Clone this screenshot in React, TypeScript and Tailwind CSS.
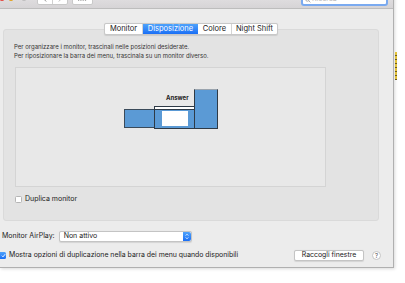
import React from 'react';

const font = { fontFamily: 'Inter, "Noto Sans", sans-serif' };

function Monitors() {
  return (
    <div className="relative ml-[11px] mt-[7px] w-[311px] h-[120px] bg-[#e8e8e8] border border-[#d4d4d4]">
      {/* left monitor */}
      <div className="absolute left-[108px] top-[41px] w-[31px] h-[19px] bg-[#5b9ad5] border border-[#3a4a5a]" />
      {/* main monitor with menu bar */}
      <div className="absolute left-[138px] top-[38px] w-[41px] h-[23px] bg-[#5b9ad5] border border-[#2e3a46] flex flex-col">
        <div className="h-[3px] bg-white border-b border-[#2e3a46]" />
        <div className="ml-[7px] mt-[1px] w-[26px] h-[15px] bg-white" />
      </div>
      {/* right monitor */}
      <div className="absolute left-[178px] top-[21px] w-[24px] h-[40px] bg-[#5b9ad5] border border-[#2e3a46] border-t-[#9aa4ae]" />
      <div className="absolute left-[150px] top-[27px] text-[6px] font-bold text-[#222] leading-none">Answer</div>
    </div>
  );
}

export default function App() {
  return (
    <div className="w-[405px] h-[283px] bg-white overflow-hidden flex text-[#222]" style={font}>
      <div className="w-[394px] h-[281px] -mt-[13px] bg-[#ececec] border-r border-b border-[#b0b0b0] shadow-[1px_1px_3px_rgba(0,0,0,0.15)] flex flex-col shrink-0">
        {/* TITLE BAR */}
        <div className="h-[22px] shrink-0 bg-gradient-to-b from-[#ebe9eb] to-[#d6d4d6] border-b border-[#bdbdbd] flex items-center relative">
          <div className="flex items-center gap-[2px] -ml-[1px]">
            <span className="w-[6px] h-[6px] rounded-full bg-[#fc5f57] border border-[#e0443e]" />
            <span className="w-[6px] h-[6px] rounded-full bg-[#fdbc2e] border border-[#de9f1e] ml-[1px]" />
            <span className="w-[6px] h-[6px] rounded-full bg-[#d0d0d0] border border-[#bcbcbc] ml-[5px]" />
          </div>
          <div className="ml-[10px] flex h-[12px] mt-[3px] rounded-[2px] bg-white border border-[#c9c9c9]">
            <div className="w-[15px] flex items-center justify-center border-r border-[#d0d0d0]">
              <svg width="4" height="6" viewBox="0 0 4 6"><path d="M3.2 0.5 0.8 3 3.2 5.5" fill="none" stroke="#777" strokeWidth="0.8" /></svg>
            </div>
            <div className="w-[14px] flex items-center justify-center">
              <svg width="4" height="6" viewBox="0 0 4 6"><path d="M0.8 0.5 3.2 3 0.8 5.5" fill="none" stroke="#aaa" strokeWidth="0.8" /></svg>
            </div>
          </div>
          <div className="ml-[4px] w-[21px] h-[12px] mt-[3px] rounded-[2px] bg-white border border-[#c9c9c9] flex items-center justify-center">
            <svg width="9" height="4" viewBox="0 0 9 4">
              {[0, 2.3, 4.6, 6.9].map((x) => (
                <g key={x}>
                  <rect x={x} y="0" width="1.2" height="1.2" fill="#777" />
                  <rect x={x} y="2.4" width="1.2" height="1.2" fill="#777" />
                </g>
              ))}
            </svg>
          </div>
          <div className="flex-1 text-center text-[7px] text-[#4a4a4a] mt-[1px] pr-[10px]">iMac</div>
          <div className="mr-[5px] w-[87px] h-[13px] mt-[4px] rounded-[3px] bg-white border-2 border-[#7aaaf0] flex items-center pl-[2px] text-[7px] text-[#b8b8b8]">
            <svg width="6" height="6" viewBox="0 0 10 10" className="mr-[1px]"><circle cx="4" cy="4" r="3" fill="none" stroke="#999" strokeWidth="1.3" /><path d="M6.2 6.2 9 9" stroke="#999" strokeWidth="1.3" /></svg>
            Ricerca
          </div>
        </div>

        {/* TABS */}
        <div className="relative z-10 mt-[14px] ml-[104px] flex h-[12px] w-[174px] bg-white border border-[#c8c8c8] rounded-[2px] text-[7.5px] shadow-[0_0.5px_1px_rgba(0,0,0,0.1)]">
          <div className="w-[38px] flex items-center justify-center border-r border-[#d4d4d4]">Monitor</div>
          <div className="w-[55px] flex items-center justify-center bg-gradient-to-b from-[#4fa2fb] to-[#1a6ef5] text-white">Disposizione</div>
          <div className="w-[34px] flex items-center justify-center border-r border-[#d4d4d4]">Colore</div>
          <div className="flex-1 flex items-center justify-center">Night Shift</div>
        </div>

        {/* GROUP BOX */}
        <div className="ml-[3px] -mt-[6px] w-[376px] h-[192px] bg-[#e3e3e3] border border-[#dadada] rounded-[3px] flex flex-col">
          <div className="pl-[10px] pt-[12px] text-[6px] leading-[9px] text-[#333]">
            <div>Per organizzare i monitor, trascinali nelle posizioni desiderate.</div>
            <div>Per riposizionare la barra dei menu, trascinala su un monitor diverso.</div>
          </div>
          <Monitors />
          <div className="ml-[11px] mt-[7px] flex items-center gap-[3px] text-[7px]">
            <span className="w-[7px] h-[7px] bg-white border border-[#b5b5b5] rounded-[1.5px]" />
            Duplica monitor
          </div>
        </div>

        {/* AIRPLAY */}
        <div className="mt-[10px] ml-[2px] flex items-center h-[11px] text-[7px]">
          <span>Monitor AirPlay:</span>
          <div className="ml-[4px] w-[133px] h-[11px] bg-white border border-[#c4c4c4] rounded-[2px] flex items-center justify-between pl-[4px] shadow-[0_0.5px_1px_rgba(0,0,0,0.1)]">
            <span>Non attivo</span>
            <span className="w-[8px] h-full bg-gradient-to-b from-[#4fa2fb] to-[#1a6ef5] rounded-r-[2px] flex items-center justify-center">
              <svg width="4" height="7" viewBox="0 0 4 7"><path d="M0.7 2.6 2 1.2 3.3 2.6M0.7 4.4 2 5.8 3.3 4.4" fill="none" stroke="white" strokeWidth="0.8" /></svg>
            </span>
          </div>
        </div>

        {/* BOTTOM ROW */}
        <div className="mt-[8px] flex items-center h-[11px] text-[6.9px]">
          <span className="w-[6px] h-[7px] bg-gradient-to-b from-[#4fa2fb] to-[#1a6ef5] rounded-r-[1.5px] flex items-center justify-center">
            <svg width="5" height="5" viewBox="0 0 6 6"><path d="M1 3.2 2.4 4.6 5 1.4" fill="none" stroke="white" strokeWidth="1.1" /></svg>
          </span>
          <span className="ml-[3px]">Mostra opzioni di duplicazione nella barra dei menu quando disponibili</span>
          <div className="ml-auto w-[70px] h-[11px] bg-white border border-[#c4c4c4] rounded-[2px] flex items-center justify-center shadow-[0_0.5px_1px_rgba(0,0,0,0.1)]">Raccogli finestre</div>
          <div className="ml-[8px] mr-[12px] w-[9px] h-[9px] rounded-full bg-white border border-[#c4c4c4] flex items-center justify-center text-[6px] text-[#555]">?</div>
        </div>
      </div>
      <div className="mt-[52px] ml-[1px] w-[2px] h-[28px] bg-[repeating-linear-gradient(#e2c23a_0px,#e2c23a_3px,#6b5a20_3px,#6b5a20_4px)]" />
    </div>
  );
}
